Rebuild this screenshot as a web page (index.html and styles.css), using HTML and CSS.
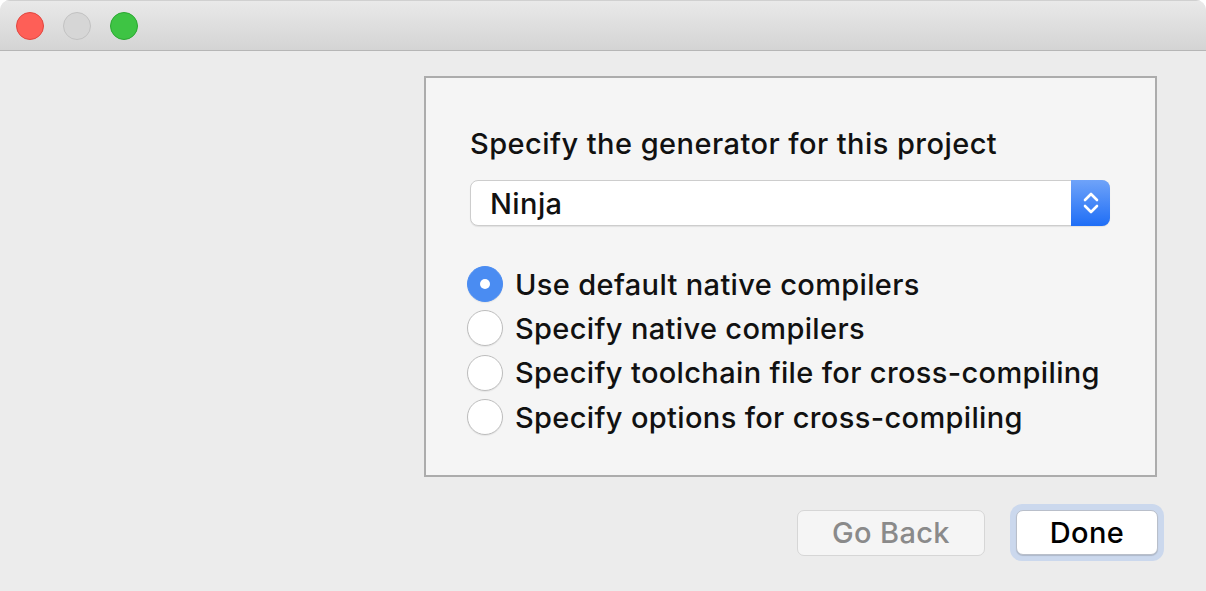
FILE: index.html
```html
<!DOCTYPE html>
<html>
<head>
<meta charset="utf-8">
<link rel="stylesheet" href="styles.css">
</head>
<body>
<div class="window">
  <div class="titlebar">
    <span class="light red"></span>
    <span class="light gray"></span>
    <span class="light green"></span>
  </div>
  <div class="content">
    <div class="panel">
      <div class="heading">Specify the generator for this project</div>
      <div class="select">
        <span class="select-value">Ninja</span>
        <span class="select-arrows">
          <svg width="20" height="26" viewBox="0 0 20 26">
            <path d="M4 10 L10 4 L16 10" fill="none" stroke="#fff" stroke-width="2.6" stroke-linecap="round" stroke-linejoin="round"/>
            <path d="M4 16 L10 22 L16 16" fill="none" stroke="#fff" stroke-width="2.6" stroke-linecap="round" stroke-linejoin="round"/>
          </svg>
        </span>
      </div>
      <div class="radios">
        <div class="radio-row"><span class="radio checked"></span><span class="label">Use default native compilers</span></div>
        <div class="radio-row"><span class="radio"></span><span class="label">Specify native compilers</span></div>
        <div class="radio-row"><span class="radio"></span><span class="label">Specify toolchain file for cross-compiling</span></div>
        <div class="radio-row"><span class="radio"></span><span class="label">Specify options for cross-compiling</span></div>
      </div>
    </div>
    <div class="buttons">
      <button class="btn back">Go Back</button>
      <span class="focus-ring"><button class="btn done">Done</button></span>
    </div>
  </div>
</div>
</body>
</html>
```
FILE: styles.css
```css
* { box-sizing: border-box; }
html, body { margin: 0; padding: 0; background: #ffffff; }
body {
  font-family: Inter, "Liberation Sans", sans-serif;
  width: 1206px;
  height: 591px;
  overflow: hidden;
}
.window {
  width: 1206px;
  height: 591px;
  background: #ececec;
  border-radius: 10px 10px 0 0;
  overflow: hidden;
}
.titlebar {
  height: 51px;
  background: linear-gradient(#e9e9e9, #d4d4d4);
  border-bottom: 1px solid #b6b6b6;
  border-top: 1px solid #d0d0d0;
  display: flex;
  align-items: center;
  padding-left: 16px;
  gap: 19px;
}
.light {
  width: 28px;
  height: 28px;
  border-radius: 50%;
  display: block;
}
.red { background: #fe5f57; border: 1px solid #e2463f; }
.gray { background: #d6d6d6; border: 1px solid #c2c2c2; }
.green { background: #3ec444; border: 1px solid #2aa831; }
.content {
  padding: 25px 0 0 424px;
}
.panel {
  width: 733px;
  height: 401px;
  border: 2px solid #acacac;
  background: #f5f5f5;
  padding: 48px 0 0 44px;
  display: flex;
  flex-direction: column;
}
.heading {
  font-size: 29px;
  font-weight: 500;
  line-height: 36px;
  color: #111;
  letter-spacing: 0.45px;
}
.select {
  margin-top: 18px;
  width: 640px;
  height: 46px;
  background: #fff;
  border: 1px solid #cdcdcd;
  border-radius: 8px;
  display: flex;
  align-items: center;
  justify-content: space-between;
  box-shadow: 0 1px 1px rgba(0,0,0,0.08);
}
.select-value {
  font-size: 29px;
  font-weight: 500;
  padding-left: 19px;
  color: #111;
  letter-spacing: 0.4px;
}
.select-arrows {
  width: 39px;
  height: 46px;
  margin: -1px -1px -1px 0;
  border-radius: 0 8px 8px 0;
  background: linear-gradient(#6fa3f9, #1f6ef6);
  display: flex;
  align-items: center;
  justify-content: center;
}
.radios {
  margin-top: 36px;
  display: flex;
  flex-direction: column;
}
.radio-row {
  height: 44.3px;
  display: flex;
  align-items: center;
  gap: 12px;
  margin-left: -3px;
}
.radio {
  width: 36px;
  height: 36px;
  border-radius: 50%;
  background: #fff;
  border: 1px solid #bdbdbd;
  box-shadow: 0 1px 1px rgba(0,0,0,0.06);
  flex: none;
  position: relative;
}
.radio.checked {
  background: #4a8cf2;
  border-color: #4a8cf2;
}
.radio.checked::after {
  content: "";
  position: absolute;
  left: 12px;
  top: 12px;
  width: 10px;
  height: 10px;
  border-radius: 50%;
  background: #fff;
}
.label {
  font-size: 29px;
  font-weight: 500;
  color: #111;
  letter-spacing: 0.35px;
}
.buttons {
  width: 740px;
  margin-top: 27px;
  display: flex;
  justify-content: flex-end;
  align-items: center;
  gap: 25px;
}
.btn {
  font-family: Inter, "Liberation Sans", sans-serif;
  font-size: 29px;
  font-weight: 500;
  letter-spacing: 0.35px;
  height: 46px;
  border-radius: 7px;
  margin: 0;
  padding: 0;
}
.back {
  width: 188px;
  background: #f5f5f5;
  border: 1px solid #d6d6d6;
  color: #8a8a8a;
}
.focus-ring {
  display: block;
  padding: 6px;
  border-radius: 12px;
  background: #cbd8ed;
}
.done {
  display: block;
  width: 142px;
  height: 45px;
  background: #fff;
  border: 1px solid #b9bfca;
  color: #000;
  box-shadow: 0 1px 1px rgba(0,0,0,0.15);
}
```
